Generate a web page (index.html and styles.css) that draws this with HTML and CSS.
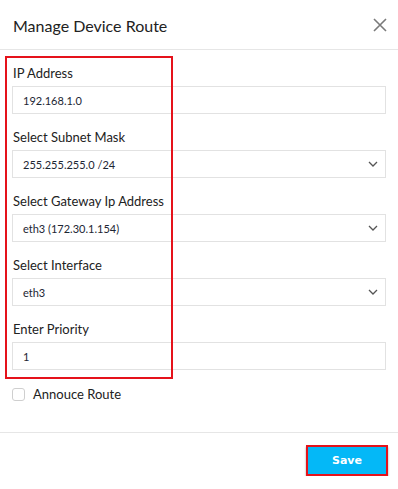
FILE: index.html
```html
<!DOCTYPE html>
<html lang="en">
<head>
  <meta charset="UTF-8">
  <meta name="viewport" content="width=device-width, initial-scale=1.0">
  <title>Manage Device Route</title>
  <link rel="stylesheet" href="styles.css">
</head>
<body>

  <div class="modal">
    <header class="modal-header">
      <h1>Manage Device Route</h1>
      <button class="close-btn" aria-label="Close">
        <svg width="14" height="14" viewBox="0 0 14 14">
          <path d="M1 1 L13 13 M13 1 L1 13" stroke="#7a7a7a" stroke-width="1.6" fill="none"/>
        </svg>
      </button>
    </header>

    <div class="modal-body">
      <!-- annotation box round the fields -->
      <div class="highlight"></div>

      <div class="field">
        <label>IP Address</label>
        <div class="input">192.168.1.0</div>
      </div>

      <div class="field">
        <label>Select Subnet Mask</label>
        <div class="input select">
          <span>255.255.255.0 /24</span>
          <svg class="chevron" width="10" height="6" viewBox="0 0 10 6"><path d="M1 1 L5 5 L9 1" stroke="#555" stroke-width="1.3" fill="none"/></svg>
        </div>
      </div>

      <div class="field">
        <label>Select Gateway Ip Address</label>
        <div class="input select">
          <span>eth3 (172.30.1.154)</span>
          <svg class="chevron" width="10" height="6" viewBox="0 0 10 6"><path d="M1 1 L5 5 L9 1" stroke="#555" stroke-width="1.3" fill="none"/></svg>
        </div>
      </div>

      <div class="field">
        <label>Select Interface</label>
        <div class="input select">
          <span>eth3</span>
          <svg class="chevron" width="10" height="6" viewBox="0 0 10 6"><path d="M1 1 L5 5 L9 1" stroke="#555" stroke-width="1.3" fill="none"/></svg>
        </div>
      </div>

      <div class="field">
        <label>Enter Priority</label>
        <div class="input">1</div>
      </div>

      <div class="check-row">
        <span class="checkbox"></span>
        <span>Annouce Route</span>
      </div>
    </div>

    <footer class="modal-footer">
      <button class="save-btn">Save</button>
    </footer>
  </div>

</body>
</html>
```

FILE: styles.css
```css
body {
  margin: 0;
  padding: 0;
  background-color: #fff;
  font-family: Lato, "Liberation Sans", sans-serif;
  color: #222;
}

.modal {
  width: 398px;
}

.modal-header {
  height: 49px;
  display: flex;
  align-items: center;
  justify-content: space-between;
  padding: 0 11px 0 13px;
  border-bottom: 1px solid #e6e6e6;
}

.modal-header h1 {
  margin: 0;
  font-size: 16px;
  font-weight: normal;
  color: #222;
  padding-top: 1px;
}

.close-btn {
  background: none;
  border: none;
  padding: 0;
  width: 14px;
  height: 14px;
  display: flex;
  cursor: pointer;
}

.modal-body {
  position: relative;
  padding: 14px 12px 28px 12px;
}

.highlight {
  position: absolute;
  top: 6px;
  left: 5px;
  width: 164px;
  height: 319px;
  border: 2px solid #e5121b;
}

.field {
  margin-bottom: 14px;
}

.field:last-of-type {
  margin-bottom: 0;
}

.field label {
  display: block;
  font-size: 13px;
  line-height: 18px;
  margin-bottom: 4px;
  padding-left: 1px;
}

.input {
  height: 26px;
  border: 1px solid #e2e2e2;
  padding: 0 10px;
  display: flex;
  align-items: center;
  font-size: 11px;
  color: #1c2633;
}

.select {
  justify-content: space-between;
  padding-right: 7px;
}

.check-row {
  margin-top: 13px;
  display: flex;
  align-items: center;
  gap: 8px;
  height: 20px;
  font-size: 13px;
}

.checkbox {
  width: 11px;
  height: 11px;
  border: 1px solid #cfcfcf;
  border-radius: 3px;
}

.modal-footer {
  border-top: 1px solid #e6e6e6;
  display: flex;
  justify-content: flex-end;
  padding: 12px 10px 0 0;
}

.save-btn {
  width: 82px;
  height: 31px;
  background-color: #04b8f7;
  border: 2px solid #e5121b;
  color: #fff;
  font-family: "DejaVu Sans", sans-serif;
  font-weight: bold;
  font-size: 11px;
  box-shadow: 0 2px 2px rgba(0, 0, 0, 0.35);
  cursor: pointer;
}
```
